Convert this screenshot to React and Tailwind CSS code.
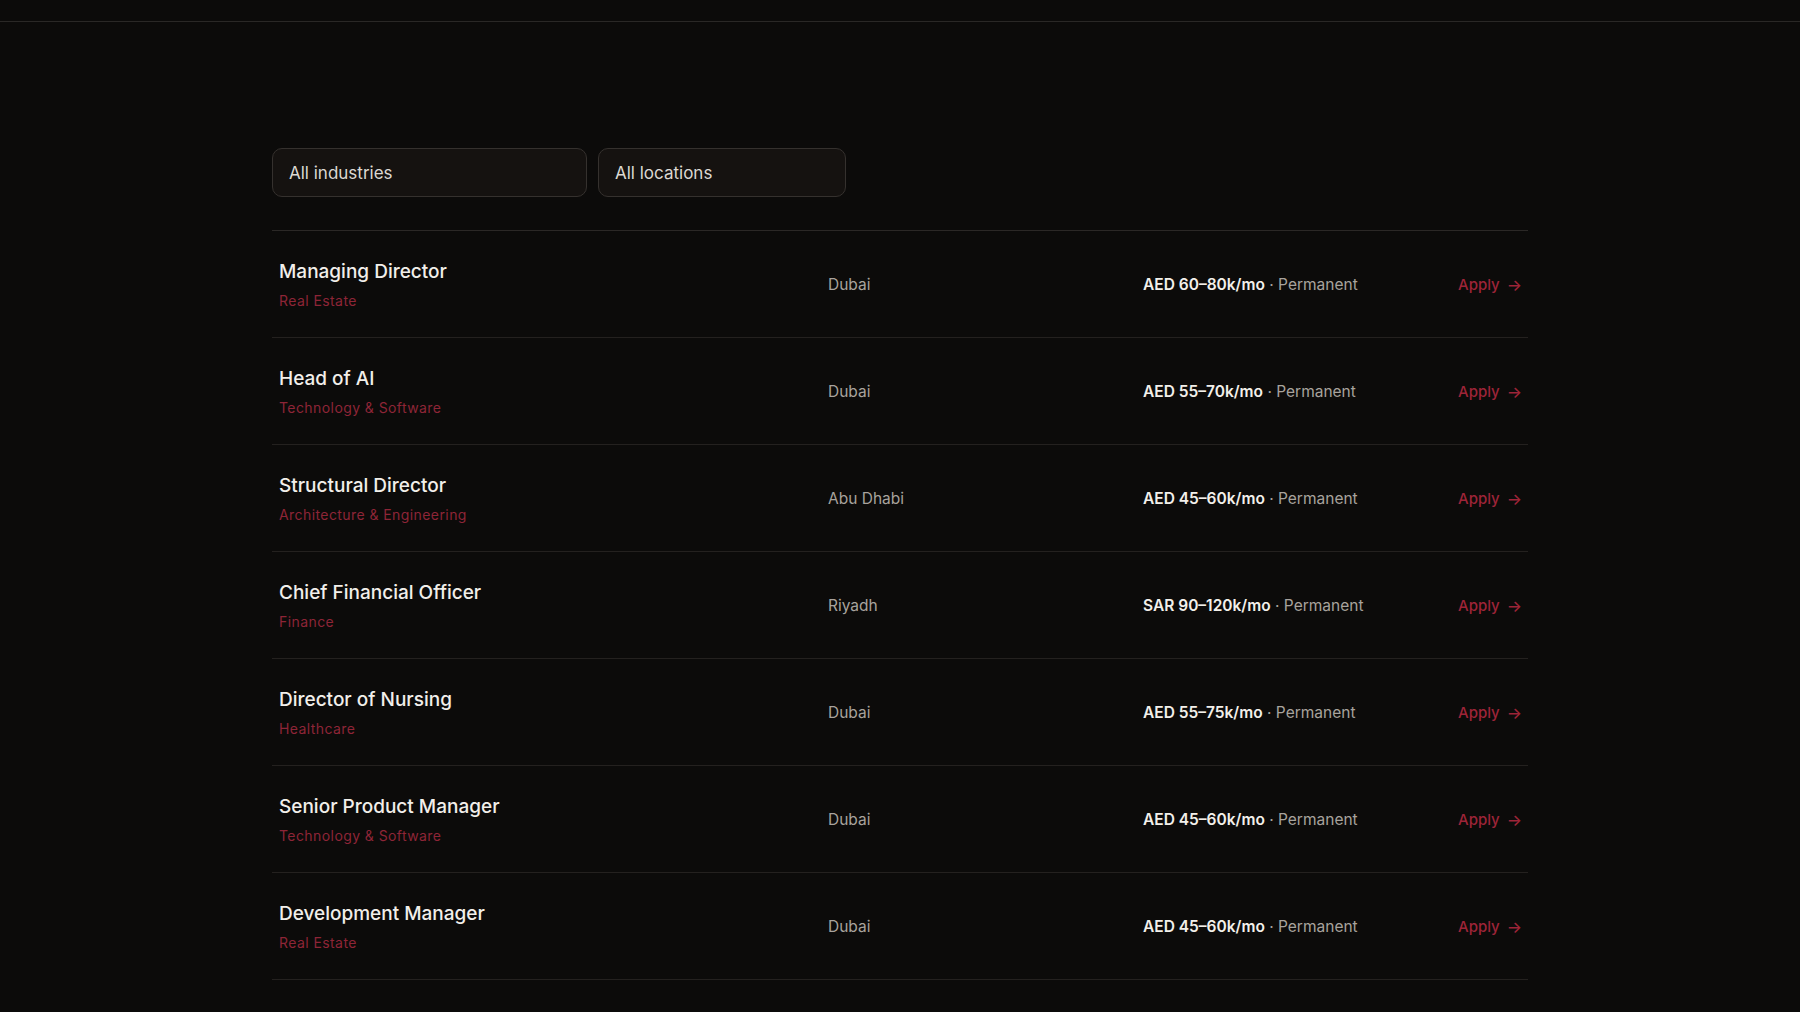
import React from 'react';

// Open roles listing with industry / location filters

const jobs = [
  { title: 'Managing Director', industry: 'Real Estate', location: 'Dubai', salary: 'AED 60–80k/mo', type: 'Permanent' },
  { title: 'Head of AI', industry: 'Technology & Software', location: 'Dubai', salary: 'AED 55–70k/mo', type: 'Permanent' },
  { title: 'Structural Director', industry: 'Architecture & Engineering', location: 'Abu Dhabi', salary: 'AED 45–60k/mo', type: 'Permanent' },
  { title: 'Chief Financial Officer', industry: 'Finance', location: 'Riyadh', salary: 'SAR 90–120k/mo', type: 'Permanent' },
  { title: 'Director of Nursing', industry: 'Healthcare', location: 'Dubai', salary: 'AED 55–75k/mo', type: 'Permanent' },
  { title: 'Senior Product Manager', industry: 'Technology & Software', location: 'Dubai', salary: 'AED 45–60k/mo', type: 'Permanent' },
  { title: 'Development Manager', industry: 'Real Estate', location: 'Dubai', salary: 'AED 45–60k/mo', type: 'Permanent' },
];

const FilterBox = ({ label, width }) => (
  <div className={`${width} h-[49px] flex items-center px-4 pt-[3px] rounded-[10px] border border-[#35312e] bg-[#151210] text-[17px] text-[#dcd8d2]`}>
    {label}
  </div>
);

const JobRow = ({ job }) => (
  <div className="grid grid-cols-[549px_315px_1fr_auto] items-center h-[107px] pt-[2px] pl-[7px] pr-1.5 border-b border-[#24211f]">
    <div>
      <div className="text-[19px] leading-[26px] font-medium text-[#f2efea]">{job.title}</div>
      <div className="mt-[6px] text-[14px] leading-[20px] tracking-[0.03em] text-[#8e2537]">{job.industry}</div>
    </div>
    <div className="text-[15.5px] text-[#a8a39d]">{job.location}</div>
    <div className="text-[15.5px] text-[#a8a39d]">
      <span className="font-semibold text-[#f3f0ea]">{job.salary}</span> · {job.type}
    </div>
    <a href="#" className="flex items-center gap-[7px] text-[15px] font-medium text-[#9e2438]">
      Apply <span className="text-[16px] leading-none">→</span>
    </a>
  </div>
);

const App = () => {
  return (
    <div className="min-h-screen bg-[#0c0b0a] font-['Inter',sans-serif] antialiased">
      {/* header strip */}
      <div className="h-[22px] border-b border-[#2a2826]" />

      <div className="max-w-[1256px] mx-auto pt-[126px]">
        <div className="flex gap-[11px] mb-[33px]">
          <FilterBox label="All industries" width="w-[315px]" />
          <FilterBox label="All locations" width="w-[248px]" />
        </div>

        <div className="border-t border-[#2b2826]">
          {jobs.map((job) => (
            <JobRow key={job.title} job={job} />
          ))}
        </div>
      </div>
    </div>
  );
};

export default App;
